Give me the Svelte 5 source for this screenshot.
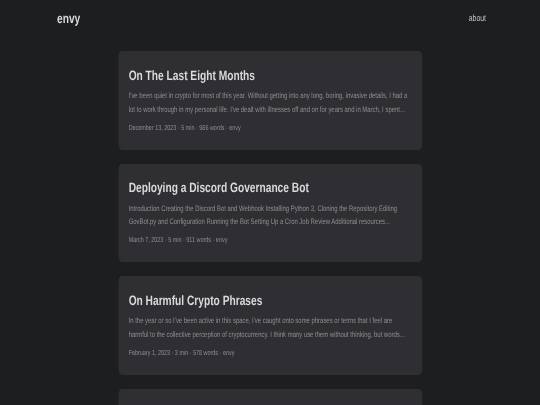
<script>
  const posts = [
    {
      title: 'On The Last Eight Months',
      summary: "I've been quiet in crypto for most of this year. Without getting into any long, boring, invasive details, I had a lot to work through in my personal life. I've dealt with illnesses off and on for years and in March, I spent...",
      meta: 'December 13, 2023 · 5 min · 986 words · envy'
    },
    {
      title: 'Deploying a Discord Governance Bot',
      summary: 'Introduction Creating the Discord Bot and Webhook Installing Python 3, Cloning the Repository Editing GovBot.py and Configuration Running the Bot Setting Up a Cron Job Review Additional resources...',
      meta: 'March 7, 2023 · 5 min · 911 words · envy'
    },
    {
      title: 'On Harmful Crypto Phrases',
      summary: "In the year or so I've been active in this space, I've caught onto some phrases or terms that I feel are harmful to the collective perception of cryptocurrency. I think many use them without thinking, but words...",
      meta: 'February 1, 2023 · 3 min · 578 words · envy'
    }
  ];
</script>

<div class="viewport">
  <!-- the shot is squeezed sideways, so lay out at 720 wide and scale down to 540 -->
  <div class="page">
    <nav class="nav">
      <a class="logo" href="#home">envy</a>
      <a class="link" href="#about">about</a>
    </nav>

    <main class="main">
      {#each posts as post}
        <article class="entry">
          <h2>{post.title}</h2>
          <p>{post.summary}</p>
          <footer>{post.meta}</footer>
        </article>
      {/each}
      <article class="entry"></article>
    </main>
  </div>
</div>

<style>
  :global(body) {
    background: #1d1e20;
    overflow: hidden;
  }

  .viewport {
    width: 540px;
    height: 405px;
    overflow: hidden;
  }

  .page {
    width: 720px;
    height: 405px;
    transform: scaleX(0.75);
    transform-origin: 0 0;
    filter: blur(0.5px);
    font-family: "Liberation Sans", Arial, sans-serif;
    text-rendering: geometricPrecision;
  }

  .nav {
    display: flex;
    justify-content: space-between;
    align-items: center;
    height: 36px;
    padding: 0 72px 0 76px;
  }

  .logo {
    color: #dadadb;
    font-size: 13.6px;
    font-weight: 700;
    text-decoration: none;
  }

  .link {
    color: #c4c4c5;
    font-size: 9.2px;
    text-decoration: none;
  }

  .main {
    width: 405px;
    margin: 15px auto 0;
    display: flex;
    flex-direction: column;
    gap: 14px;
  }

  .entry {
    background: #2e2e33;
    border-radius: 5px;
    padding: 14.5px 14px 0;
    height: 98.5px;
    box-sizing: border-box;
    flex: none;
  }

  h2 {
    margin: 0;
    color: #dadadb;
    font-size: 13.6px;
    line-height: 20px;
    font-weight: 700;
  }

  p {
    margin: 3.5px 0 0;
    color: #8f9091;
    font-size: 7.92px;
    line-height: 13.6px;
  }

  footer {
    margin-top: 5.5px;
    color: #8f9091;
    font-size: 7.25px;
    line-height: 12px;
  }
</style>
